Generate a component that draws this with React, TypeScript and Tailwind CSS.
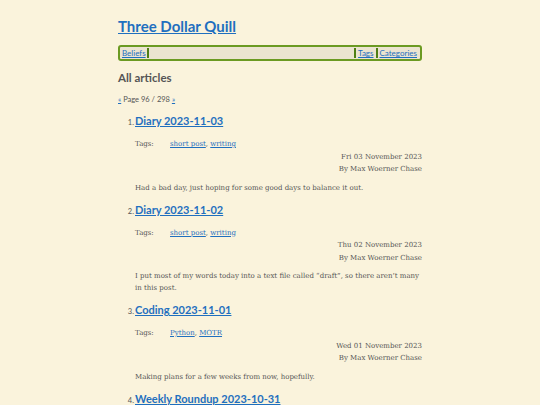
import React from "react";

const heading = { fontFamily: 'Lato, "Open Sans", sans-serif' };
const body = { fontFamily: '"DejaVu Serif", "Liberation Serif", serif' };

type Post = { title: string; tags: string[]; date: string; summary: string };

const posts: Post[] = [
  { title: "Diary 2023-11-03", tags: ["short post", "writing"], date: "Fri 03 November 2023", summary: "Had a bad day, just hoping for some good days to balance it out." },
  { title: "Diary 2023-11-02", tags: ["short post", "writing"], date: "Thu 02 November 2023", summary: "I put most of my words today into a text file called \u201cdraft\u201d, so there aren\u2019t many in this post." },
  { title: "Coding 2023-11-01", tags: ["Python", "MOTR"], date: "Wed 01 November 2023", summary: "Making plans for a few weeks from now, hopefully." },
  { title: "Weekly Roundup 2023-10-31", tags: ["short post"], date: "Tue 31 October 2023", summary: "" },
];

export default function App() {
  return (
    <div className="w-full bg-[#faf3dc] overflow-hidden h-[405px]">
      <div className="mx-auto w-[304px] pt-[14px]">
        <h1 style={heading} className="text-[15px] font-bold leading-[24px] text-[#1f6fbf] underline">
          Three Dollar Quill
        </h1>
        <nav
          style={heading}
          className="mt-[7px] flex items-center h-[16px] rounded-[3px] border-2 border-[#6b9a22] bg-[#ebe4d0] px-[1px] text-[8px] leading-[10px]"
        >
          <a className="px-[1px] text-[#1f6fbf] underline">Beliefs</a>
          <span className="h-[10px] w-[2px] bg-[#4f7f14]" />
          <span className="flex-1" />
          <span className="h-[10px] w-[2px] bg-[#4f7f14]" />
          <a className="px-[2px] text-[#1f6fbf] underline">Tags</a>
          <span className="h-[10px] w-[2px] bg-[#4f7f14]" />
          <a className="px-[2px] text-[#1f6fbf] underline">Categories</a>
        </nav>
        <h2 style={heading} className="mt-[8px] text-[11.5px] font-bold leading-[18px] text-[#555]">
          All articles
        </h2>
        <p style={heading} className="mt-[8px] text-[7.5px] leading-[10px] text-[#555]">
          <a className="text-[#1f6fbf] underline">«</a> Page 96 / 298 <a className="text-[#1f6fbf] underline">»</a>
        </p>
        <ol className="mt-[6px]">
          {posts.map((p, i) => (
            <li key={i} className="mb-[6px]">
              <div className="flex items-baseline">
                <span style={heading} className="w-[17px] text-right pr-[1px] text-[7.5px] text-[#555]">{i + 1}.</span>
                <a style={heading} className="text-[11px] font-bold leading-[20px] text-[#1f6fbf] underline">{p.title}</a>
              </div>
              <div style={body} className="pl-[17px] text-[7px] leading-[12.5px] text-[#555]">
                <div className="mt-[7px] flex">
                  <span className="w-[35px]">Tags:</span>
                  <span>
                    {p.tags.map((t, j) => (
                      <React.Fragment key={j}>
                        {j > 0 && ", "}
                        <a className="text-[#1f6fbf] underline">{t}</a>
                      </React.Fragment>
                    ))}
                  </span>
                </div>
                <div className="text-right">{p.date}</div>
                <div className="text-right">By Max Woerner Chase</div>
                {p.summary && <p className="mt-[6px] leading-[12px]">{p.summary}</p>}
              </div>
            </li>
          ))}
        </ol>
      </div>
    </div>
  );
}
